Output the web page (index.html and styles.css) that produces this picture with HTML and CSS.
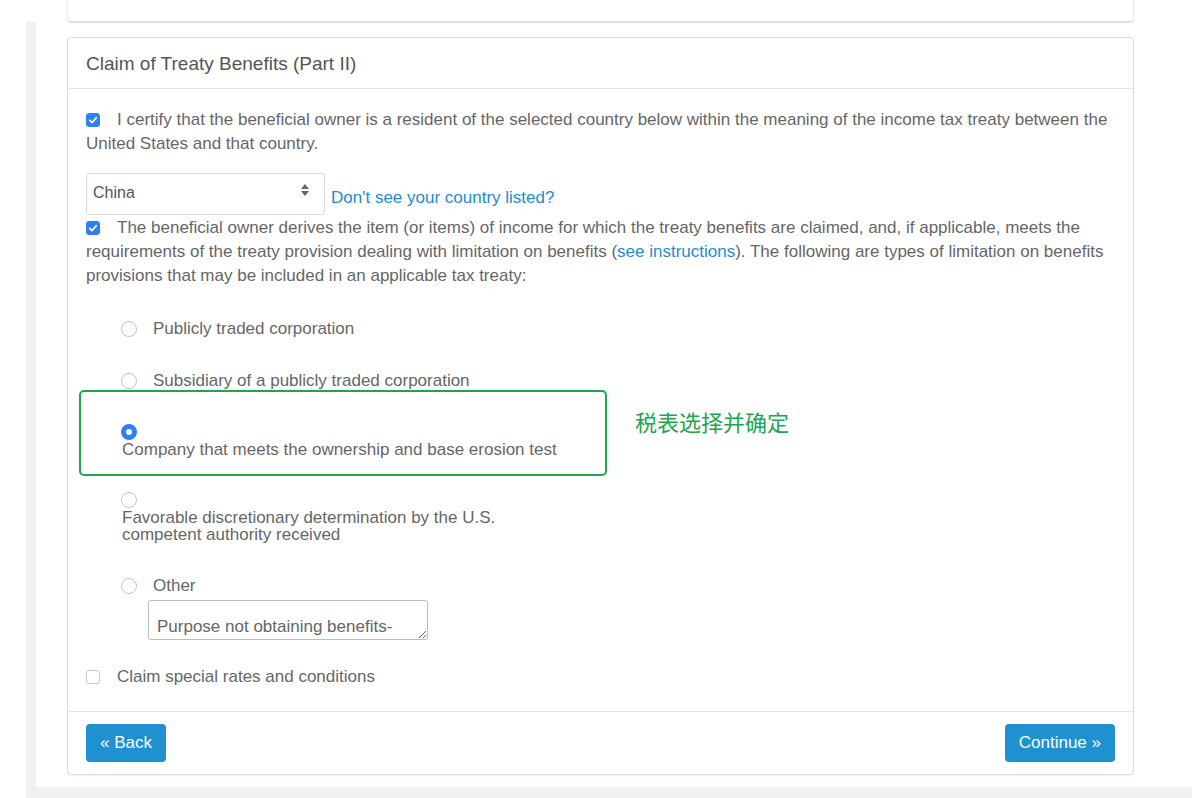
FILE: index.html
```html
<!DOCTYPE html>
<html lang="en">
<head>
<meta charset="utf-8">
<title>Claim of Treaty Benefits</title>
<link rel="stylesheet" href="styles.css">
</head>
<body>
<div class="shell">
  <div class="content">
    <div class="prev-panel"></div>
    <section class="panel">
      <div class="panel-heading">Claim of Treaty Benefits (Part II)</div>
      <div class="panel-body">
        <p class="check-line"><span class="cb checked"><svg viewBox="0 0 14 14" width="14" height="14"><path d="M3.6 7.2 L6 9.6 L10.4 4.6" fill="none" stroke="#fff" stroke-width="1.6" stroke-linecap="round" stroke-linejoin="round"/></svg></span>I certify that the beneficial owner is a resident of the selected country below within the meaning of the income tax treaty between the United States and that country.</p>
        <div class="country-row">
          <div class="select"><span>China</span><svg class="arrows" viewBox="0 0 10 14" width="10" height="14"><path d="M5 1 L9 6 L1 6 Z M5 13 L9 8 L1 8 Z" fill="#666"/></svg></div>
          <a class="link country-link" href="#">Don't see your country listed?</a>
        </div>
        <p class="check-line check-line-second"><span class="cb checked"><svg viewBox="0 0 14 14" width="14" height="14"><path d="M3.6 7.2 L6 9.6 L10.4 4.6" fill="none" stroke="#fff" stroke-width="1.6" stroke-linecap="round" stroke-linejoin="round"/></svg></span>The beneficial owner derives the item (or items) of income for which the treaty benefits are claimed, and, if applicable, meets the requirements of the treaty provision dealing with limitation on benefits (<a class="link" href="#">see instructions</a>). The following are types of limitation on benefits provisions that may be included in an applicable tax treaty:</p>
        <div class="options">
          <div class="opt opt-inline opt-first"><span class="radio"></span><span>Publicly traded corporation</span></div>
          <div class="opt opt-inline opt-second"><span class="radio"></span><span>Subsidiary of a publicly traded corporation</span></div>
          <div class="opt opt-stacked opt-third"><span class="radio on"></span><span class="opt-text">Company that meets the ownership and base erosion test</span></div>
          <div class="opt opt-stacked opt-fourth"><span class="radio"></span><span class="opt-text">Favorable discretionary determination by the U.S.<br>competent authority received</span></div>
          <div class="opt opt-inline opt-fifth"><span class="radio"></span><span>Other</span></div>
          <textarea class="other-text" rows="1">Purpose not obtaining benefits-</textarea>
        </div>
        <div class="check-row"><span class="cb"></span><span>Claim special rates and conditions</span></div>
        <div class="annotation-box"></div>
        <div class="annotation-text">税表选择并确定</div>
      </div>
      <div class="panel-footer">
        <a class="btn" href="#">&laquo; Back</a>
        <a class="btn" href="#">Continue &raquo;</a>
      </div>
    </section>
  </div>
</div>
</body>
</html>
```
FILE: styles.css
```css
* { box-sizing: border-box; }
html, body { margin: 0; padding: 0; background: #fff; }
body {
  width: 1192px;
  height: 798px;
  overflow: hidden;
  font-family: "Liberation Sans", Arial, Helvetica, sans-serif;
  color: #666;
  font-size: 17px;
}
.shell {
  display: flow-root;
  margin: 22px 0 0 26px;
  padding: 0 0 11px 10px;
  background: #f1f1f1;
}
.content {
  margin-top: -22px;
  background: #fff;
  padding: 0 58px 12px 31px;
}
.prev-panel {
  height: 22px;
  border-bottom: 1px solid #d9d9d9;
  border-left: 1px solid #eee;
  border-right: 1px solid #eee;
  border-radius: 0 0 4px 4px;
  box-shadow: 0 1px 2px rgba(0,0,0,0.12);
}
.panel {
  margin-top: 15px;
  border: 1px solid #dcdcdc;
  border-radius: 4px;
  box-shadow: 0 1px 2px rgba(0,0,0,0.06);
  background: #fff;
}
.panel-heading {
  padding: 15px 18px 13px;
  font-size: 19px;
  line-height: 22px;
  color: #555;
  border-bottom: 1px solid #e3e3e3;
}
.panel-body {
  position: relative;
  padding: 19px 18px 22px 18px;
}
.check-line {
  margin: 0;
  line-height: 24px;
}
.check-line-second { margin-top: 1px; }
.cb {
  display: inline-block;
  width: 14px;
  height: 14px;
  border-radius: 3px;
  border: 1px solid #c8c8c8;
  background: #fff;
  margin-right: 17px;
  vertical-align: -2px;
}
.cb svg { display: block; margin: -1px; }
.cb.checked {
  background: #2f80ef;
  border-color: #2f80ef;
}
.link {
  color: #1f8ccc;
  text-decoration: none;
}
.country-row {
  display: flex;
  align-items: flex-end;
  margin-top: 17px;
}
.select {
  width: 239px;
  height: 42px;
  border: 1px solid #dadada;
  border-radius: 3px;
  padding: 0 14px 0 6px;
  display: flex;
  align-items: center;
  justify-content: space-between;
  font-size: 16px;
  color: #555;
}
.select span { margin-top: -2px; }
.arrows { margin-top: -8px; }
.country-link {
  margin-left: 6px;
  margin-bottom: 5px;
  line-height: 24px;
}
.options {
  padding-left: 35px;
}
.opt { line-height: 24px; }
.opt-inline {
  display: flex;
  align-items: center;
}
.opt-inline .radio { margin-right: 16px; }
.radio {
  display: inline-block;
  width: 16px;
  height: 16px;
  border-radius: 50%;
  border: 1px solid #c4c4c4;
  background: #fff;
  flex: none;
}
.radio.on {
  border: 5px solid #2d7ff3;
  background: #fff;
}
.opt-stacked .radio { display: block; }
.opt-stacked .opt-text {
  display: block;
  line-height: 17px;
  margin-top: 1px;
  margin-left: 1px;
}
.opt-first { margin-top: 29px; }
.opt-second { margin-top: 28px; }
.opt-third { margin-top: 31px; }
.opt-fourth { margin-top: 34px; }
.opt-fifth { margin-top: 31px; }
.other-text {
  display: block;
  width: 280px;
  height: 40px;
  margin: 2px 0 0 27px;
  padding: 16px 8px 0 8px;
  border: 1px solid #bdbdbd;
  border-radius: 3px;
  font-family: "Liberation Sans", Arial, Helvetica, sans-serif;
  font-size: 17px;
  line-height: 20px;
  color: #666;
  overflow: hidden;
  resize: both;
}
.check-row {
  display: flex;
  align-items: center;
  margin-top: 25px;
  line-height: 24px;
}
.annotation-box {
  position: absolute;
  left: 11px;
  top: 301px;
  width: 528px;
  height: 86px;
  border: 2px solid #1fa54a;
  border-radius: 5px;
}
.annotation-text {
  position: absolute;
  left: 567px;
  top: 319px;
  font-family: "Noto Sans CJK SC", sans-serif;
  font-size: 22px;
  line-height: 26px;
  color: #20a64b;
}
.panel-footer {
  display: flex;
  justify-content: space-between;
  padding: 12px 18px;
  border-top: 1px solid #e3e3e3;
}
.btn {
  display: inline-flex;
  align-items: center;
  height: 38px;
  padding: 0 14px;
  background: #1f91d1;
  color: #fff;
  border-radius: 4px;
  font-size: 17px;
  text-decoration: none;
}
```
